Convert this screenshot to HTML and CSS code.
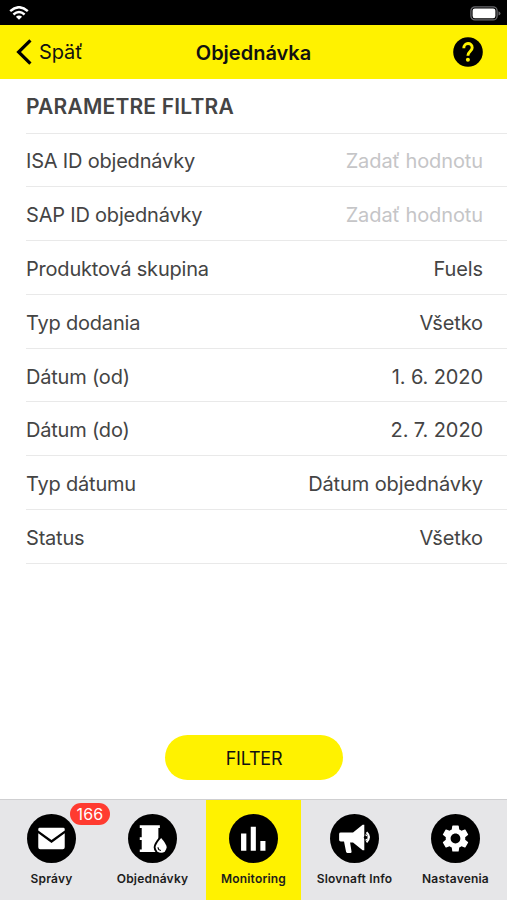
FILE: index.html
```html
<!DOCTYPE html>
<html lang="sk">
<head>
<meta charset="utf-8">
<title>Objednávka</title>
<link rel="stylesheet" href="styles.css">
</head>
<body>
<div class="status">
  <svg width="20" height="14" viewBox="0 0 20 14" fill="none" stroke="#fff" stroke-width="2.4"><path d="M1.2 5.2Q10-2.8 18.8 5.2M4.4 8.5Q10 3.6 15.6 8.5"/><path d="M6.9 10.8Q10 8.2 13.1 10.8L10 13.8Z" fill="#fff" stroke="none"/></svg>
  <svg width="31" height="15" viewBox="0 0 31 15"><rect x=".9" y=".9" width="26.2" height="13" rx="4" fill="none" stroke="#68686c" stroke-width="1.3"/><rect x="2.6" y="2.6" width="22.8" height="9.6" rx="2.2" fill="#fff"/><path d="M28.5 5.2Q30.5 5.9 30.5 7.4T28.5 9.6Z" fill="#68686c"/></svg>
</div>
<header class="header">
  <a class="back"><svg width="16" height="26" viewBox="0 0 16 26" fill="none" stroke="#000" stroke-width="3.2"><path d="M14.4 1.3 2.6 13l11.8 11.7"/></svg><span>Späť</span></a>
  <h1 class="title">Objednávka</h1>
  <svg class="help" width="30" height="30" viewBox="0 0 30 30"><circle cx="15" cy="15" r="14.8"/><path d="M10.8 11.2C10.8 4.9 19.2 5.1 19.2 10.7C19.2 14.2 14.9 14.3 14.9 18.7" fill="none" stroke="#fff200" stroke-width="2.9"/><circle cx="14.9" cy="22.7" r="2" fill="#fff200"/></svg>
</header>
<main class="content">
  <h2 class="section">PARAMETRE FILTRA</h2>
  <div class="row"><span>ISA ID objednávky</span><span class="value placeholder">Zadať hodnotu</span></div>
  <div class="row"><span>SAP ID objednávky</span><span class="value placeholder">Zadať hodnotu</span></div>
  <div class="row"><span>Produktová skupina</span><span class="value">Fuels</span></div>
  <div class="row"><span>Typ dodania</span><span class="value">Všetko</span></div>
  <div class="row"><span>Dátum (od)</span><span class="value">1. 6. 2020</span></div>
  <div class="row"><span>Dátum (do)</span><span class="value">2. 7. 2020</span></div>
  <div class="row"><span>Typ dátumu</span><span class="value">Dátum objednávky</span></div>
  <div class="row"><span>Status</span><span class="value">Všetko</span></div>
  <button class="filter">FILTER</button>
</main>
<nav class="tabs">
  <a class="tab"><svg class="icon" viewBox="0 0 50 50"><circle cx="25" cy="25" r="25"/><path d="M13 14h24q1.500 0 1.500 1.500v1.300L25 26.500 11.500 16.800V15.500Q11.500 14 13 14ZM11.500 19.700 25 29.500l13.500-9.800V34q0 2-2 2h-23q-2 0-2-2Z" fill="#fff"/></svg><span class="badge">166</span><span>Správy</span></a>
  <a class="tab"><svg class="icon" viewBox="0 0 50 50"><circle cx="25" cy="25" r="25"/><path d="M12 11.500h20.500v2.700H31V38.800H12v-2.700h2V26.500h-2v-2.700h2v-9.600h-2Z" fill="#fff"/><path d="M33.800 24.500q5.600 6.300 5.600 9.500a5.600 5.600 0 0 1-11.200 0q0-3.200 5.600-9.500Z" fill="#fff" stroke="#000" stroke-width="4" paint-order="stroke"/><path d="M30.600 34q.2 3 3 3.300" fill="none" stroke="#000" stroke-width="1.100"/></svg><span>Objednávky</span></a>
  <a class="tab active"><svg class="icon" viewBox="0 0 50 50"><circle cx="25" cy="25" r="25"/><path d="M12.300 20h5.400v17.500h-5.400ZM22.200 13h5.200v24.500h-5.200ZM32 27.500h5.200v10H32Z" fill="#fff"/></svg><span>Monitoring</span></a>
  <a class="tab"><svg class="icon" viewBox="0 0 50 50"><circle cx="25" cy="25" r="25"/><path d="M11 19h12.500l9.800-8h1.700v26h-1.700L23.500 29H20.500L22 38.500q0 1.200-1.200 1.200h-3.200q-1 0-1.200-1.100L14.300 28H11q-1.700 0-1.700-1.500v-6Q9.300 19 11 19Z" fill="#fff"/><path d="M36.300 20.200a4.200 4.200 0 0 1 0 7.400Z" fill="#fff"/><path d="M37.300 18.700Q42.300 23.500 37.300 28.900" fill="none" stroke="#fff" stroke-width="2"/><circle cx="36.300" cy="24" r="1.800"/></svg><span>Slovnaft Info</span></a>
  <a class="tab"><svg class="icon" viewBox="0 0 50 50"><circle cx="25" cy="25" r="25"/><g transform="translate(8.400 8.400) scale(1.383)"><path fill="#fff" d="M19.140 12.940c.04-.3.060-.61.060-.94 0-.32-.02-.64-.07-.94l2.030-1.580c.18-.14.23-.41.120-.61l-1.920-3.320c-.12-.22-.37-.29-.59-.22l-2.390.96c-.5-.38-1.030-.7-1.620-.94l-.36-2.540c-.04-.24-.24-.41-.48-.41h-3.840c-.24 0-.43.17-.47.41l-.36 2.540c-.59.24-1.130.57-1.620.94l-2.390-.96c-.22-.08-.47 0-.59.22L2.740 8.870c-.12.21-.08.47.12.61l2.030 1.580c-.05.3-.09.63-.09.94s.02.64.07.94l-2.030 1.580c-.18.14-.23.41-.12.61l1.920 3.320c.12.22.37.29.59.22l2.390-.96c.5.38 1.030.7 1.620.94l.36 2.540c.05.24.24.41.48.41h3.840c.24 0 .44-.17.47-.41l.36-2.540c.59-.24 1.130-.56 1.620-.94l2.390.96c.22.08.47 0 .59-.22l1.920-3.320c.12-.22.07-.47-.12-.61l-2.010-1.580zM12 15.600c-1.980 0-3.600-1.620-3.600-3.600s1.620-3.600 3.600-3.600 3.600 1.620 3.600 3.600-1.620 3.600-3.600 3.600z"/></g></svg><span>Nastavenia</span></a>
</nav>
</body>
</html>
```
FILE: styles.css
```css
* { box-sizing: border-box; }
body {
  margin: 0;
  width: 507px;
  height: 900px;
  display: flex;
  flex-direction: column;
  overflow: hidden;
  background: #fff;
  color: #444;
  font-family: Inter, "Liberation Sans", sans-serif;
}
svg { display: block; flex: none; }
.status {
  height: 25px;
  padding: 1px 6px 0 9px;
  background: #000;
  display: flex;
  align-items: center;
  justify-content: space-between;
}
.header {
  height: 54px;
  padding: 0 16px;
  background: #fff200;
  color: #111;
  display: grid;
  grid-template-columns: 1fr auto 1fr;
  align-items: center;
}
.back {
  display: flex;
  align-items: center;
  gap: 7px;
  font-size: 20px;
  letter-spacing: -0.1px;
}
.title { margin: 0; padding-top: 1px; font-size: 20px; font-weight: 600; letter-spacing: 0; }
.help { justify-self: end; margin-right: 8px; }
.content { flex: 1; display: flex; flex-direction: column; padding-left: 26px; }
.section {
  margin: 0;
  height: 54.5px;
  padding-top: 1px;
  line-height: 54px;
  font-size: 21px;
  font-weight: 600;
  letter-spacing: 0.2px;
  border-bottom: 1px solid #e9e9e9;
}
.row {
  height: 53.8px;
  padding: 3px 24px 0 0;
  border-bottom: 1px solid #e9e9e9;
  display: flex;
  align-items: center;
  justify-content: space-between;
  font-size: 20px;
  letter-spacing: -0.2px;
}
.value { letter-spacing: -0.1px; }
.placeholder { color: #c5c5c7; }
.filter {
  width: 178px;
  height: 45px;
  padding: 2px 0 0;
  margin: auto 0 19px 139px;
  border: 0;
  border-radius: 23px;
  background: #fff200;
  color: #111;
  font: 400 18px Inter, sans-serif;
  letter-spacing: -0.2px;
}
.tabs {
  height: 101px;
  padding: 0 4px;
  display: flex;
  gap: 6px;
  background: #e6e6e8;
  border-top: 1px solid #cfcfd1;
}
.tab {
  position: relative;
  width: 95px;
  padding-top: 14px;
  display: flex;
  flex-direction: column;
  align-items: center;
  gap: 8px;
  color: #1c1c1c;
  font-size: 12px;
  font-weight: 600;
  line-height: 16px;
  letter-spacing: 0.2px;
  white-space: nowrap;
}
.active { background: #fff200; }
.icon { width: 49px; height: 49px; }
.badge {
  position: absolute;
  top: 3px;
  left: 66px;
  width: 40px;
  height: 22px;
  border-radius: 11px;
  background: #ff3b30;
  color: #fff;
  font-size: 16px;
  font-weight: 400;
  line-height: 22px;
  text-align: center;
}
```
